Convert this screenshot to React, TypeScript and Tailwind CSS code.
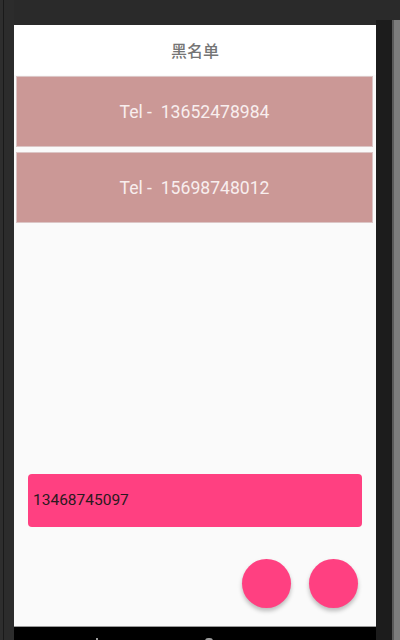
import React from "react";

export default function App() {
  return (
    <div
      className="w-[400px] h-[640px] flex flex-row bg-[#2a2a2a] overflow-hidden"
      style={{ fontFamily: "Roboto, 'Noto Sans CJK SC', sans-serif" }}
    >
      <div className="w-[14px] h-full flex flex-row">
        <div className="w-[3px] bg-[#2e2e2e]" />
        <div className="w-[1px] bg-[#1a1a1a]" />
        <div className="flex-1 bg-[#2c2c2c]" />
      </div>
      <div className="w-[362px] h-full flex flex-col">
        <div className="h-[25px] bg-[#2a2a2a]" />
        <div className="h-[601px] flex flex-col bg-[#fafafa]">
          <div className="h-[50px] bg-white flex items-center justify-center">
            <span className="text-[16px] text-[#757575] font-medium" style={{ fontFamily: "'Noto Sans CJK SC', sans-serif" }}>
              黑名单
            </span>
          </div>
          <div className="flex flex-col gap-[5px] pt-[1px] pl-[2px] pr-[3px]">
            {["13652478984", "15698748012"].map((n) => (
              <div
                key={n}
                className="h-[71px] bg-[#cb9896] border border-[#dcc6c6] flex items-center justify-center pt-[2px]"
              >
                <span className="text-[17.6px] text-[#f8eeee]">Tel -&nbsp; {n}</span>
              </div>
            ))}
          </div>
          <div className="flex-1" />
          <div className="px-[14px]">
            <div className="h-[53px] w-[334px] bg-[#ff4081] rounded-[4px] flex items-center pl-[5px]">
              <span className="text-[15.5px] text-[#2a1a20]">13468745097</span>
            </div>
          </div>
          <div className="flex flex-row justify-end gap-[18px] pr-[18px] pt-[32px] pb-[18px]">
            <div className="w-[49px] h-[49px] rounded-full bg-[#ff4081] shadow-[0_3px_4px_rgba(0,0,0,0.25)]" />
            <div className="w-[49px] h-[49px] rounded-full bg-[#ff4081] shadow-[0_3px_4px_rgba(0,0,0,0.25)]" />
          </div>
        </div>
        <div className="flex-1 bg-black border-t border-[#9a9a9a] relative">
          <div className="absolute left-[82px] top-[11px] w-[2px] h-[3px] bg-[#9a9a9a]" />
          <div className="absolute left-[191px] top-[11px] w-[8px] h-[3px] rounded-t-full bg-[#9a9a9a]" />
        </div>
      </div>
      <div className="w-[24px] h-full flex flex-row">
        <div className="w-[16px] h-full flex flex-col">
          <div className="h-[20px] bg-[#2a2a2a]" />
          <div className="flex-1 bg-[#1c1c1c]" />
        </div>
        <div className="w-[8px] h-full flex flex-col">
          <div className="h-[20px] bg-[#2a2a2a]" />
          <div className="flex-1 bg-[#7d7d7d] flex flex-row">
            <div className="w-[2px] bg-[#5a5a5a]" />
            <div className="flex-1" />
          </div>
        </div>
      </div>
    </div>
  );
}
